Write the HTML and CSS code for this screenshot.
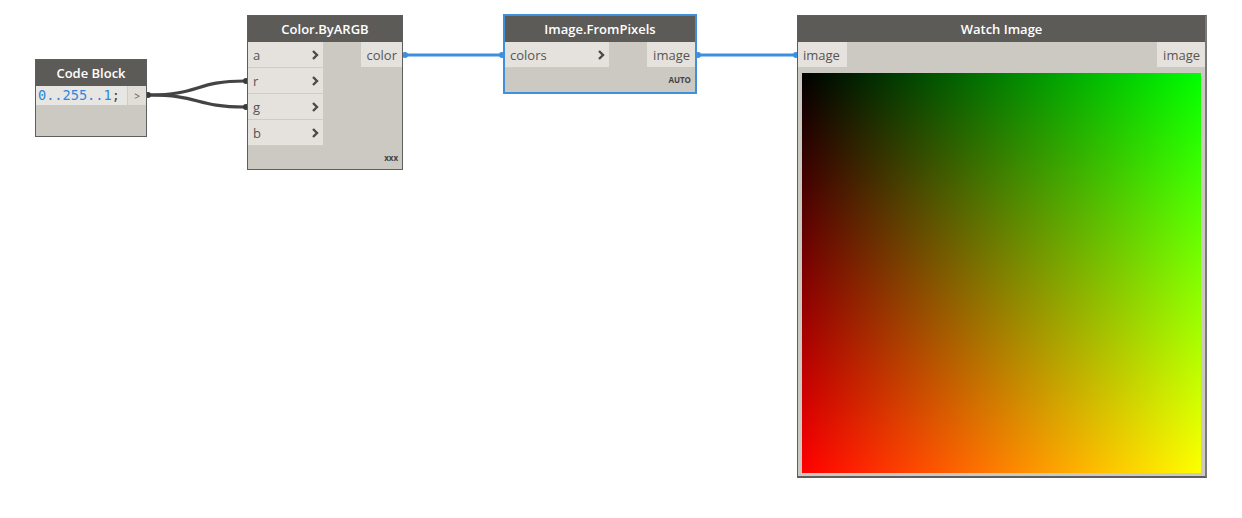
FILE: index.html
```html
<!DOCTYPE html>
<html>
<head>
<meta charset="utf-8">
<link rel="stylesheet" href="styles.css">
</head>
<body>
<div class="canvas">
  <svg class="wires" width="1242" height="518" viewBox="0 0 1242 518">
    <path d="M149 95 C 200 95, 195 81, 245 81" class="wire-dark"/>
    <path d="M149 95 C 200 95, 195 107, 245 107" class="wire-dark"/>
    <path d="M405 55 L 501 55" class="wire-blue"/>
    <path d="M699 55 L 795 55" class="wire-blue"/>
    <circle cx="148" cy="95" r="3" fill="#3a3a3a"/>
    <circle cx="246" cy="81" r="3" fill="#3a3a3a"/>
    <circle cx="246" cy="107" r="3" fill="#3a3a3a"/>
    <circle cx="405" cy="55" r="3" fill="#3d8fdf"/>
    <circle cx="502" cy="55" r="3" fill="#3d8fdf"/>
    <circle cx="698" cy="55" r="3" fill="#3d8fdf"/>
    <circle cx="796" cy="55" r="3" fill="#3d8fdf"/>
  </svg>

  <div class="node code-node">
    <div class="node-title">Code Block</div>
    <div class="code-row">
      <div class="code-text"><span class="num">0..255..1</span>;</div>
      <div class="code-out">&gt;</div>
    </div>
  </div>

  <div class="node argb-node">
    <div class="node-title">Color.ByARGB</div>
    <div class="node-body">
      <div class="inputs">
        <div class="port in">a<svg class="chev" width="7" height="10" viewBox="0 0 7 10"><path d="M1 1 L5 5 L1 9"/></svg></div>
        <div class="port in">r<svg class="chev" width="7" height="10" viewBox="0 0 7 10"><path d="M1 1 L5 5 L1 9"/></svg></div>
        <div class="port in">g<svg class="chev" width="7" height="10" viewBox="0 0 7 10"><path d="M1 1 L5 5 L1 9"/></svg></div>
        <div class="port in">b<svg class="chev" width="7" height="10" viewBox="0 0 7 10"><path d="M1 1 L5 5 L1 9"/></svg></div>
      </div>
      <div class="outputs">
        <div class="port out">color</div>
      </div>
    </div>
    <div class="node-foot">xxx</div>
  </div>

  <div class="node pix-node">
    <div class="node-title">Image.FromPixels</div>
    <div class="node-body">
      <div class="inputs">
        <div class="port in wide">colors<svg class="chev" width="7" height="10" viewBox="0 0 7 10"><path d="M1 1 L5 5 L1 9"/></svg></div>
      </div>
      <div class="outputs">
        <div class="port out">image</div>
      </div>
    </div>
    <div class="node-foot">AUTO</div>
  </div>

  <div class="node watch-node">
    <div class="node-title">Watch Image</div>
    <div class="node-body">
      <div class="port in plain">image</div>
      <div class="port out">image</div>
    </div>
    <div class="preview"></div>
  </div>
</div>
</body>
</html>
```

FILE: styles.css
```css
html, body {
  margin: 0;
  padding: 0;
  background: #ffffff;
}
body {
  font-family: "Open Sans", "Noto Sans", sans-serif;
  color: #4a4a4a;
}
.canvas {
  position: relative;
  width: 1242px;
  height: 518px;
  overflow: hidden;
}
.wires {
  position: absolute;
  left: 0;
  top: 0;
}
.wire-dark {
  fill: none;
  stroke: #444444;
  stroke-width: 3.2;
}
.wire-blue {
  fill: none;
  stroke: #3d8fdf;
  stroke-width: 2.8;
}
.node {
  position: absolute;
  box-sizing: border-box;
  background: #ccc8c2;
  border: 1px solid #5e5e5e;
  display: flex;
  flex-direction: column;
}
.node-title {
  height: 26px;
  background: #5d5b58;
  color: #ffffff;
  font-weight: 600;
  font-size: 13px;
  display: flex;
  align-items: center;
  justify-content: center;
  flex-shrink: 0;
}
.node-body {
  display: flex;
  justify-content: space-between;
  align-items: flex-start;
}
.inputs {
  display: flex;
  flex-direction: column;
}
.port {
  height: 25px;
  background: #e5e2dd;
  font-size: 13px;
  color: #555555;
  display: flex;
  align-items: center;
  box-sizing: border-box;
}
.port.in {
  width: 75px;
  padding: 0 4px 0 5px;
  justify-content: space-between;
  border-bottom: 1px solid #cfcbc5;
  height: 26px;
}
.port.in.wide {
  width: 104px;
}
.port.in.plain {
  width: auto;
  padding-right: 7px;
  border-bottom: none;
  height: 25px;
}
.port.out {
  padding: 0 5px 0 6px;
}
.chev {
  fill: none;
  stroke: #4a4a4a;
  stroke-width: 2.4;
}
.node-foot {
  margin-top: auto;
  text-align: right;
  font-size: 8px;
  font-weight: 700;
  color: #444444;
  padding: 0 4px 6px 0;
}

/* Code block */
.code-node {
  left: 35px;
  top: 59px;
  width: 112px;
  height: 78px;
}
.code-row {
  display: flex;
  height: 19px;
  background: #e8e6e2;
}
.code-text {
  flex: 1;
  font-family: "DejaVu Sans Mono", "Liberation Mono", monospace;
  font-size: 13.6px;
  line-height: 19px;
  color: #444444;
  padding-left: 2px;
  white-space: nowrap;
  overflow: hidden;
}
.code-text .num {
  color: #2f86dd;
}
.code-out {
  width: 18px;
  flex-shrink: 0;
  border-left: 1px solid #cfcbc5;
  font-size: 10px;
  color: #555;
  display: flex;
  align-items: center;
  justify-content: center;
  background: #e1ded9;
}

/* Color.ByARGB */
.argb-node {
  left: 247px;
  top: 15px;
  width: 156px;
  height: 155px;
}

/* Image.FromPixels */
.pix-node {
  left: 503px;
  top: 14px;
  width: 194px;
  height: 80px;
  border: 2px solid #3f8fdb;
}
.pix-node .node-foot {
  padding-bottom: 7px;
}

/* Watch Image */
.watch-node {
  left: 797px;
  top: 15px;
  width: 410px;
  height: 463px;
  border-bottom: 2px solid #5e5e5e;
  border-right: 2px solid #7a7a7a;
}
.preview {
  margin: 6px 4px 0 4px;
  width: 399px;
  height: 400px;
  background:
    linear-gradient(to bottom, #000000, #ff0000),
    linear-gradient(to right, #000000, #00ff00);
  background-blend-mode: screen;
}
```
